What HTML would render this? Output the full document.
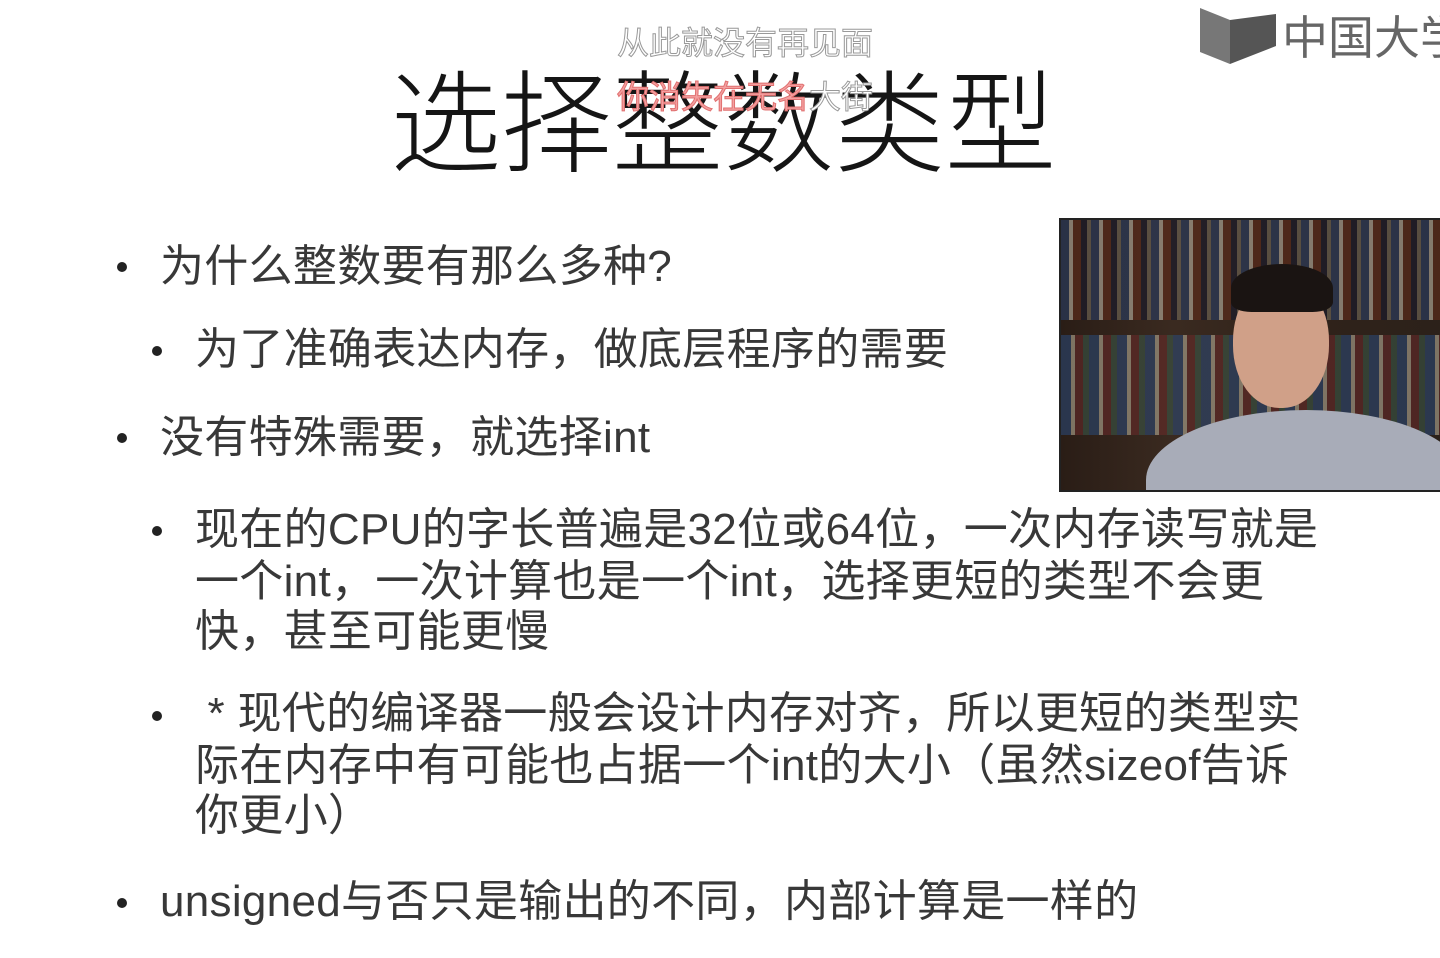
<!DOCTYPE html>
<html><head><meta charset="utf-8"><style>
html,body{margin:0;padding:0;}
body{width:1440px;height:958px;background:#fff;position:relative;overflow:hidden;font-family:"Liberation Sans","Noto Sans CJK SC",sans-serif;color:#383838;}
.t{position:absolute;white-space:nowrap;font-size:44px;line-height:52px;letter-spacing:0.3px;}
.b{position:absolute;width:10px;height:10px;border-radius:50%;background:#222;}
.title{position:absolute;left:390px;top:50px;font-size:111px;line-height:130px;color:#151515;white-space:nowrap;font-family:"Noto Sans CJK SC",sans-serif;font-weight:300;}
.sub{position:absolute;font-size:32px;white-space:nowrap;font-family:"Noto Sans CJK SC",sans-serif;}
</style></head><body>
<div class="title">选择整数类型</div>
<div class="sub" style="left:617px;top:18px;color:#fff;-webkit-text-stroke:1px #999;">从此就没有再见面</div>
<div class="sub" style="left:617px;top:72px;color:#f4a0a0;-webkit-text-stroke:1px #e07070;">你消失在无名<span style="color:#fff;-webkit-text-stroke:1px #999">大街</span></div>
<svg style="position:absolute;left:1200px;top:6px" width="240" height="64">
<path d="M0 2 L30 14 L30 58 L0 46Z" fill="#777"/>
<path d="M30 14 L76 8 L76 40 L30 58Z" fill="#555"/>
<text x="82" y="48" font-size="46" fill="#666" font-family="Noto Sans CJK SC,sans-serif">中国大学</text>
</svg>
<div style="position:absolute;left:1061px;top:220px;width:379px;height:270px;background:linear-gradient(90deg,#2a1d16,#3a2a20 30%,#30231a 60%,#2c211a);overflow:hidden;outline:2px solid #222;">
<div style="position:absolute;left:0;top:0;width:380px;height:100px;background:repeating-linear-gradient(90deg,#2a3a5a 0 8px,#a9a090 8px 12px,#5a2a1a 12px 20px,#1a1a2a 20px 26px,#6a6050 26px 30px);opacity:.7"></div>
<div style="position:absolute;left:0;top:115px;width:380px;height:100px;background:repeating-linear-gradient(90deg,#2a4a7a 0 10px,#c0b8a0 10px 14px,#6a2a2a 14px 22px,#3a5a4a 22px 28px);opacity:.55"></div>
<div style="position:absolute;left:85px;top:190px;width:320px;height:140px;border-radius:50% 50% 0 0;background:#a8acb8;"></div>
<div style="position:absolute;left:172px;top:58px;width:96px;height:130px;border-radius:48%;background:#d0a088;"></div>
<div style="position:absolute;left:170px;top:44px;width:102px;height:48px;border-radius:50% 50% 20% 20%;background:#1a1412;"></div>
</div>
<div class="b" style="left:117px;top:262px"></div>
<div class="t" style="left:160px;top:241px">为什么整数要有那么多种?</div>
<div class="b" style="left:152px;top:346px"></div>
<div class="t" style="left:195px;top:324px">为了准确表达内存，做底层程序的需要</div>
<div class="b" style="left:117px;top:433px"></div>
<div class="t" style="left:160px;top:412px">没有特殊需要，就选择int</div>
<div class="b" style="left:152px;top:526px"></div>
<div class="t" style="left:195px;top:504px">现在的CPU的字长普遍是32位或64位，一次内存读写就是</div>
<div class="t" style="left:195px;top:556px">一个int，一次计算也是一个int，选择更短的类型不会更</div>
<div class="t" style="left:195px;top:606px">快，甚至可能更慢</div>
<div class="b" style="left:152px;top:711px"></div>
<div class="t" style="left:195px;top:688px">&nbsp;* 现代的编译器一般会设计内存对齐，所以更短的类型实</div>
<div class="t" style="left:195px;top:740px">际在内存中有可能也占据一个int的大小（虽然sizeof告诉</div>
<div class="t" style="left:195px;top:790px">你更小）</div>
<div class="b" style="left:117px;top:898px"></div>
<div class="t" style="left:160px;top:876px">unsigned与否只是输出的不同，内部计算是一样的</div>
</body></html>
